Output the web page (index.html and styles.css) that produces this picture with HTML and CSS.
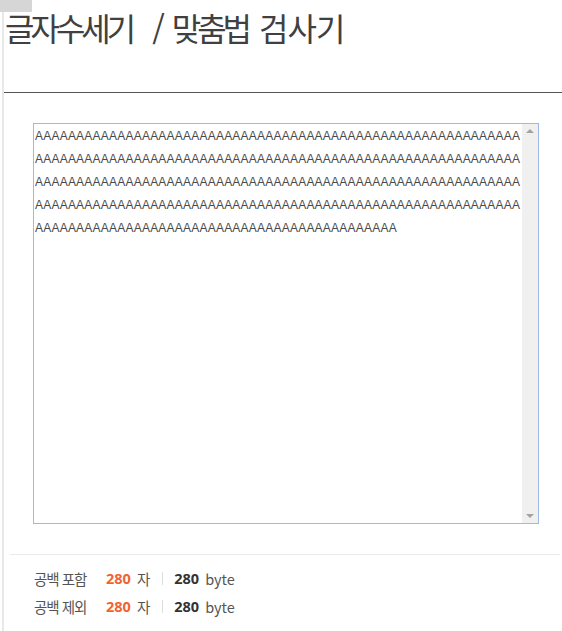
FILE: index.html
```html
<!DOCTYPE html>
<html lang="ko">
<head>
<meta charset="utf-8">
<title>글자수세기 / 맞춤법 검사기</title>
<link rel="stylesheet" href="styles.css">
</head>
<body>
<div class="corner"></div>
<main class="page">
  <header class="page-header">
    <h1 class="title">글자수세기 <span class="title-slash">/</span> 맞춤법 <span class="title-last">검사기</span></h1>
  </header>
  <section class="editor">
    <div class="editor-box">
      <textarea class="editor-input" spellcheck="false">AAAAAAAAAAAAAAAAAAAAAAAAAAAAAAAAAAAAAAAAAAAAAAAAAAAAAAAAAAAAAAAAAAAAAAAAAAAAAAAAAAAAAAAAAAAAAAAAAAAAAAAAAAAAAAAAAAAAAAAAAAAAAAAAAAAAAAAAAAAAAAAAAAAAAAAAAAAAAAAAAAAAAAAAAAAAAAAAAAAAAAAAAAAAAAAAAAAAAAAAAAAAAAAAAAAAAAAAAAAAAAAAAAAAAAAAAAAAAAAAAAAAAAAAAAAAAAAAAAAAAAAAAAAAAAAAAAAAAAAA</textarea>
      <div class="scrollbar" aria-hidden="true">
        <span class="arrow arrow-up"></span>
        <span class="arrow arrow-down"></span>
      </div>
    </div>
  </section>
  <footer class="stats">
    <div class="stat-row">
      <span class="stat-label">공백 포함</span>
      <span class="stat-chars">280</span><span class="stat-unit">자</span>
      <span class="stat-sep"></span>
      <span class="stat-bytes">280</span><span class="stat-unit">byte</span>
    </div>
    <div class="stat-row">
      <span class="stat-label">공백 제외</span>
      <span class="stat-chars">280</span><span class="stat-unit">자</span>
      <span class="stat-sep"></span>
      <span class="stat-bytes">280</span><span class="stat-unit">byte</span>
    </div>
  </footer>
</main>
</body>
</html>
```

FILE: styles.css
```css
html, body {
  margin: 0;
  padding: 0;
  background: #fff;
}

body {
  padding-left: 2px;
  font-family: "Noto Sans CJK KR", "Noto Sans", sans-serif;
  color: #444;
}

.corner {
  position: absolute;
  left: 0;
  top: 0;
  width: 32px;
  height: 12px;
  background: #d6d6d6;
}

.page {
  border-left: 2px solid #e8e8e8;
  min-height: 631px;
  box-sizing: border-box;
}

.page-header {
  height: 92px;
  border-bottom: 1px solid #555;
}

.title {
  margin: 0;
  padding: 5px 0 0 1px;
  font-size: 32px;
  font-weight: 400;
  line-height: 44px;
  letter-spacing: -4px;
  word-spacing: 3px;
  color: #404040;
}

.title-slash {
  margin: 0 3px 0 12px;
}

.title-last {
  margin-left: 3px;
  letter-spacing: -1px;
}

.editor {
  padding: 30px 23px 0 29px;
}

.editor-box {
  position: relative;
  width: 506px;
  height: 401px;
}

.editor-input {
  display: block;
  width: 100%;
  height: 100%;
  box-sizing: border-box;
  margin: 0;
  padding: 1px 16px 0 1px;
  border: 1px solid #9fb9e6;
  outline: none;
  resize: none;
  overflow: hidden;
  font-family: "Liberation Sans", sans-serif;
  font-size: 12px;
  letter-spacing: 0.22px;
  line-height: 23px;
  color: #484848;
  background: #fff;
}

.scrollbar {
  position: absolute;
  top: 1px;
  right: 1px;
  bottom: 1px;
  width: 16px;
  background: #f0f0f0;
}

.arrow {
  position: absolute;
  left: 4px;
  width: 0;
  height: 0;
  border-left: 4px solid transparent;
  border-right: 4px solid transparent;
}

.arrow-up {
  top: 5px;
  border-bottom: 4px solid #a3a3a3;
}

.arrow-down {
  bottom: 5px;
  border-top: 4px solid #a3a3a3;
}

.stats {
  margin: 30px 2px 0 6px;
  border-top: 1px solid #ebebeb;
  padding: 9px 0 0 24px;
}

.stat-row {
  display: flex;
  align-items: center;
  height: 28px;
  font-size: 14.5px;
  color: #555;
}

.stat-label {
  width: 72px;
  letter-spacing: -1px;
}

.stat-chars {
  font-family: "Noto Sans", sans-serif;
  font-weight: 700;
  color: #f06434;
}

.stat-bytes {
  font-family: "Noto Sans", sans-serif;
  font-weight: 700;
  color: #333;
}

.stat-unit {
  margin-left: 6px;
}

.stat-sep {
  width: 1px;
  height: 13px;
  background: #dcdcdc;
  margin: 0 11px 0 12px;
}
```
